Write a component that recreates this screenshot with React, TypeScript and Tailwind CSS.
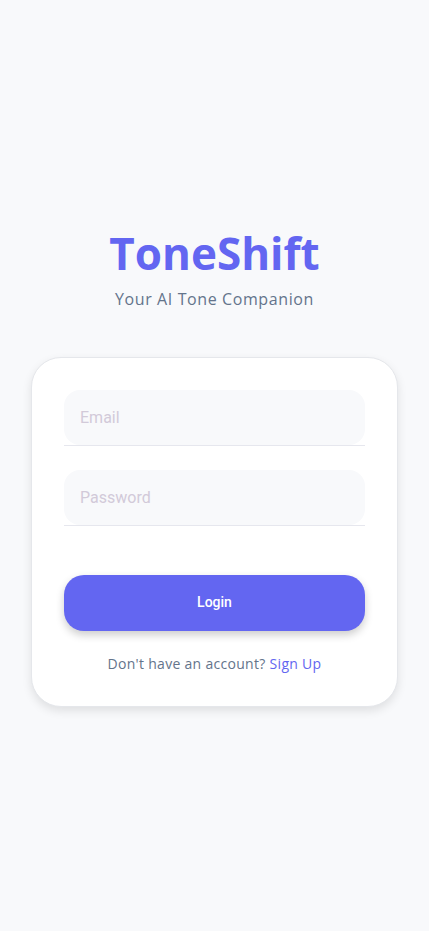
import React from "react";

export default function App() {
  return (
    <div
      className="min-h-[931px] bg-[#f8f9fb] flex flex-col justify-center px-[31px] pt-[2px]"
      style={{ fontFamily: '"Open Sans", sans-serif' }}
    >
      <h1 className="text-center text-[44px] leading-[53px] font-bold text-[#6366f1]">
        ToneShift
      </h1>
      <p className="text-center text-[16px] leading-[24px] text-[#64748b] mt-[7px] tracking-[0.6px]">
        Your AI Tone Companion
      </p>
      <div className="mt-[46px] bg-white rounded-[30px] border border-[#e5e7eb] shadow-[0_4px_10px_rgba(0,0,0,0.1)] px-8 pt-8 pb-[31px]">
        <div className="border-b border-[#e6e7ee]">
          <input
            type="email"
            placeholder="Email"
            className="w-full h-[55px] rounded-2xl bg-[#f8f9fb] px-4 text-[16px] outline-none placeholder:text-[#d2cad9] text-gray-800"
            style={{ fontFamily: "Roboto, sans-serif" }}
          />
        </div>
        <div className="border-b border-[#e6e7ee] mt-[24px]">
          <input
            type="password"
            placeholder="Password"
            className="w-full h-[55px] rounded-2xl bg-[#f8f9fb] px-4 text-[16px] outline-none placeholder:text-[#d2cad9] text-gray-800"
            style={{ fontFamily: "Roboto, sans-serif" }}
          />
        </div>
        <button
          className="mt-[49px] w-full h-[56px] rounded-[20px] bg-[#6366f1] text-white text-[14px] font-medium shadow-[0_4px_8px_rgba(0,0,0,0.2)]"
          style={{ fontFamily: "Roboto, sans-serif" }}
        >
          Login
        </button>
        <p className="mt-[22px] text-center text-[14px] leading-[22px] text-[#64748b] tracking-[0.3px]">
          Don't have an account? <span className="text-[#6366f1]">Sign Up</span>
        </p>
      </div>
    </div>
  );
}
